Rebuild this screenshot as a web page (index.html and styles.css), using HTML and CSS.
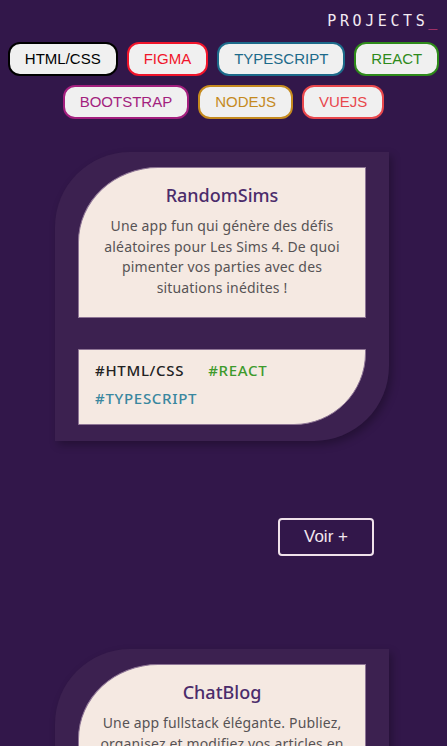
FILE: index.html
```html
<!DOCTYPE html>
<html lang="fr">
<head>
<meta charset="utf-8">
<title>Projects</title>
<link rel="stylesheet" href="styles.css">
</head>
<body>
<header class="top">
  <h1 class="brand">PROJECTS<span class="cursor">_</span></h1>
</header>
<nav class="filters">
  <button class="tag tag-html">HTML/CSS</button>
  <button class="tag tag-figma">FIGMA</button>
  <button class="tag tag-ts">TYPESCRIPT</button>
  <button class="tag tag-react">REACT</button>
  <button class="tag tag-bootstrap">BOOTSTRAP</button>
  <button class="tag tag-node">NODEJS</button>
  <button class="tag tag-vue">VUEJS</button>
</nav>
<main class="projects">
  <section class="project">
    <article class="card">
      <div class="card-top">
        <h2 class="card-title">RandomSims</h2>
        <p class="card-desc">Une app fun qui génère des défis aléatoires pour Les Sims 4. De quoi pimenter vos parties avec des situations inédites !</p>
      </div>
      <div class="card-bottom">
        <span class="hash hash-html">#HTML/CSS</span>
        <span class="hash hash-react">#REACT</span>
        <span class="hash hash-ts">#TYPESCRIPT</span>
      </div>
    </article>
    <div class="more-row"><a class="more" href="#">Voir +</a></div>
  </section>
  <section class="project">
    <article class="card">
      <div class="card-top">
        <h2 class="card-title">ChatBlog</h2>
        <p class="card-desc">Une app fullstack élégante. Publiez, organisez et modifiez vos articles en toute simplicité.</p>
      </div>
      <div class="card-bottom">
        <span class="hash hash-react">#REACT</span>
        <span class="hash hash-node">#NODEJS</span>
      </div>
    </article>
  </section>
</main>
</body>
</html>
```
FILE: styles.css
```css
* { box-sizing: border-box; }
html, body { margin: 0; padding: 0; }
body {
  background: #32174a;
  font-family: "Liberation Sans", Arial, sans-serif;
  overflow: hidden;
}
.top {
  display: flex;
  justify-content: flex-end;
  padding: 12px 6px 0 0;
  height: 42px;
}
.brand {
  margin: 0;
  font-family: "DejaVu Sans Mono", monospace;
  font-weight: normal;
  font-size: 15px;
  line-height: 18px;
  letter-spacing: 3.6px;
  color: #f3eaf2;
}
.cursor { color: #e8457f; }
.filters {
  display: flex;
  flex-wrap: wrap;
  justify-content: center;
  gap: 9px 9px;
  padding: 0 6px;
}
.tag {
  font-family: "Liberation Sans", Arial, sans-serif;
  font-size: 15px;
  line-height: 18px;
  padding: 6px 15px;
  border: 2px solid;
  border-radius: 12px;
  background: #f0f0f0;
  cursor: pointer;
}
.tag-html { color: #000; border-color: #000; }
.tag-figma { color: #f0142a; border-color: #f0142a; }
.tag-ts { color: #1c6a8a; border-color: #1c6a8a; }
.tag-react { color: #2e8a1a; border-color: #2e8a1a; }
.tag-bootstrap { color: #a31f7e; border-color: #a31f7e; }
.tag-node { color: #c58a1e; border-color: #c58a1e; }
.tag-vue { color: #e8474c; border-color: #e8474c; }

.projects { padding-top: 33px; }
.project { margin-bottom: 93px; }
.card {
  width: 334px;
  margin-left: 55px;
  background: #3c2150;
  border-radius: 75px 0 75px 0;
  padding: 15px 23px 16px;
  display: flex;
  flex-direction: column;
  gap: 31px;
  box-shadow: 3px 4px 8px rgba(0, 0, 0, 0.28);
  font-family: "Noto Sans", sans-serif;
}
.card-top {
  background: #f5e9e2;
  border: 1px solid #8e7595;
  border-radius: 80px 0 0 0 / 75px 0 0 0;
  height: 151px;
  padding: 14px 14px 0 14px;
  text-align: center;
}
.card-title {
  margin: 0;
  font-size: 18px;
  font-weight: 500;
  line-height: 26px;
  color: #4b2c6b;
}
.card-desc {
  margin: 8px 0 0;
  font-size: 14px;
  letter-spacing: 0.15px;
  line-height: 20.6px;
  color: #575355;
}
.card-bottom {
  background: #f5e9e2;
  border: 1px solid #8e7595;
  border-radius: 0 0 72px 0;
  height: 76px;
  padding: 10px 16px 0;
  display: flex;
  flex-wrap: wrap;
  align-content: flex-start;
  column-gap: 24px;
  row-gap: 8px;
}
.hash {
  font-size: 15px;
  line-height: 20px;
  font-weight: 500;
  letter-spacing: 0.7px;
}
.hash-html { color: #222; }
.hash-react { color: #3d9a2c; }
.hash-ts { color: #3a879f; }
.hash-node { color: #c58a1e; }
.more-row {
  display: flex;
  justify-content: flex-end;
  padding: 77px 73px 0 0;
}
.more {
  display: block;
  width: 96px;
  height: 38px;
  border: 2px solid #f0e2ea;
  border-radius: 4px;
  color: #f3e8ee;
  font-size: 17px;
  line-height: 34px;
  text-align: center;
  text-decoration: none;
}
```
